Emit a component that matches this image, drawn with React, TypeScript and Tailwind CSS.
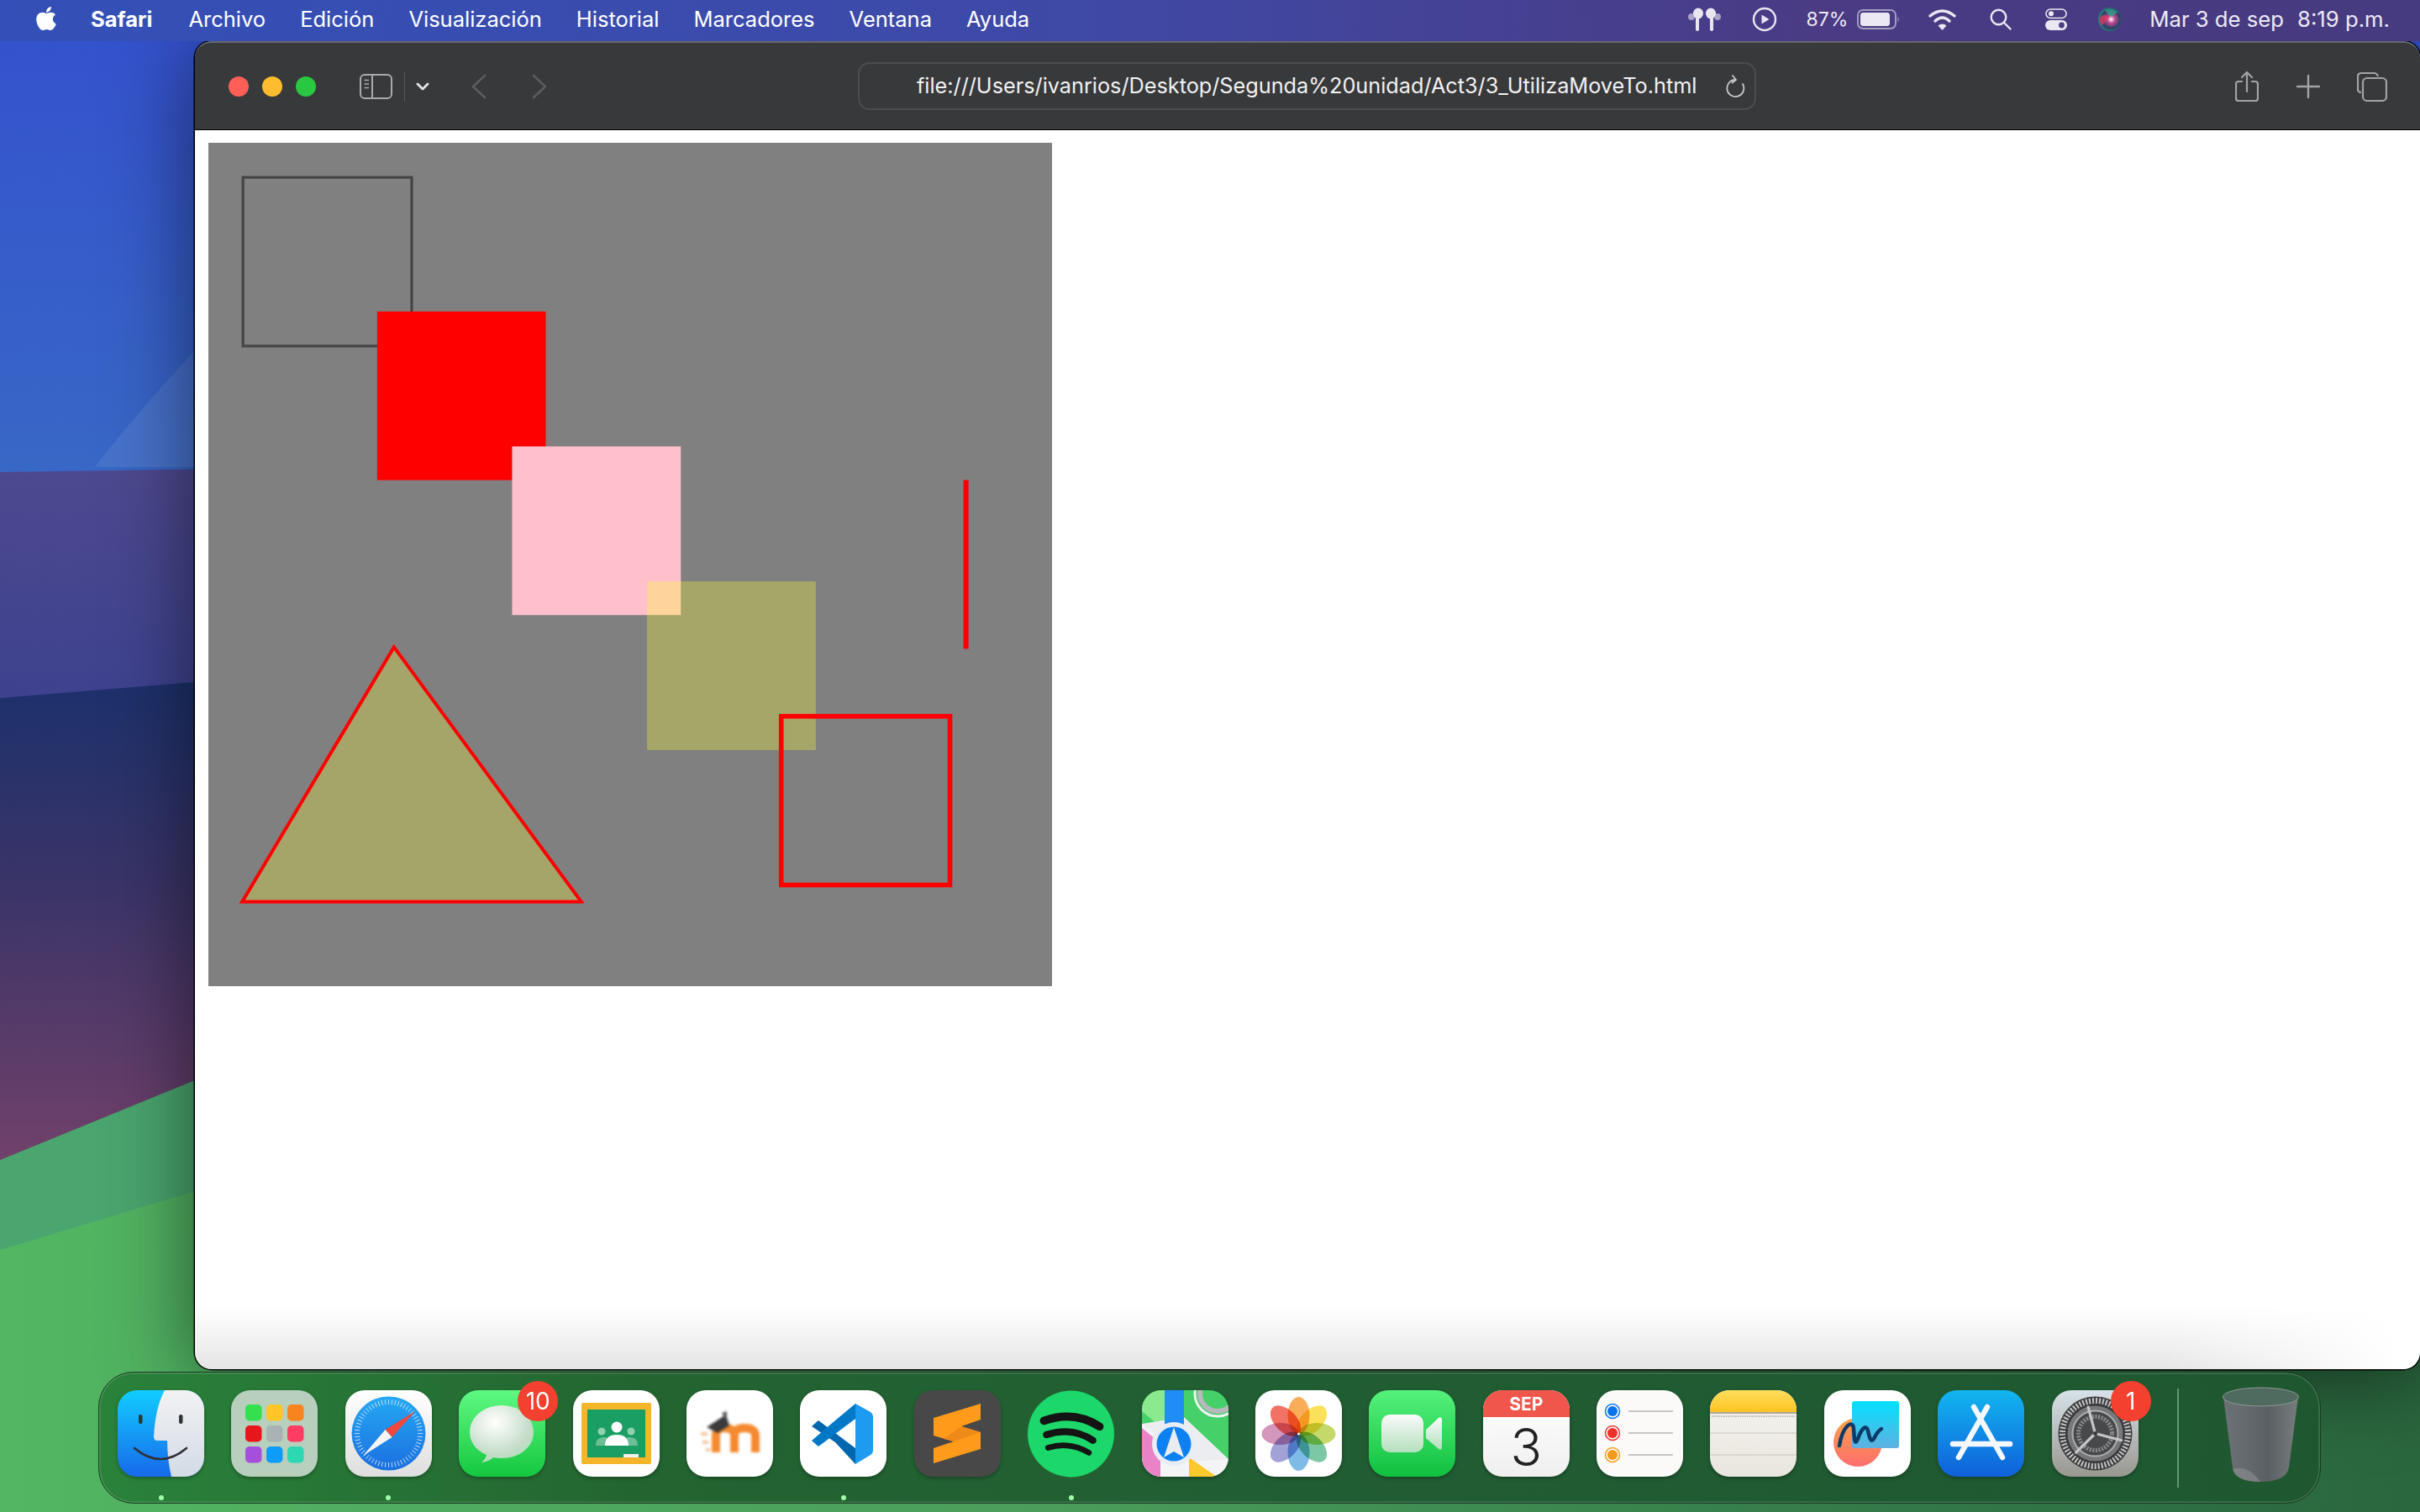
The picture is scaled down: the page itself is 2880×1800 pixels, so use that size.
import type { ReactNode } from "react";
import { FaApple } from "react-icons/fa";

const menuItems = ["Archivo", "Edición", "Visualización", "Historial", "Marcadores", "Ventana", "Ayuda"];

function Wallpaper() {
  return (
    <svg className="absolute inset-0" width="2880" height="1800" viewBox="0 0 2880 1800">
      <defs>
        <linearGradient id="wpBlue" x1="0" y1="0" x2="0" y2="1">
          <stop offset="0" stopColor="#3450ce" />
          <stop offset="1" stopColor="#3868c6" />
        </linearGradient>
        <linearGradient id="wpPurple" x1="0" y1="0" x2="0" y2="1">
          <stop offset="0" stopColor="#4f4a90" />
          <stop offset="1" stopColor="#3c418e" />
        </linearGradient>
        <linearGradient id="wpDusk" x1="0" y1="0" x2="0" y2="1">
          <stop offset="0" stopColor="#18306c" />
          <stop offset="0.45" stopColor="#3b3468" />
          <stop offset="1" stopColor="#74426a" />
        </linearGradient>
        <linearGradient id="wpGreen" x1="0" y1="0" x2="1" y2="0">
          <stop offset="0" stopColor="#52b662" />
          <stop offset="0.45" stopColor="#4a9c5a" />
          <stop offset="0.75" stopColor="#347c4a" />
          <stop offset="1" stopColor="#2a663e" />
        </linearGradient>
      </defs>
      <rect width="2880" height="570" fill="url(#wpBlue)" />
      <path d="M113 556 Q170 480 300 345 L300 556 Z" fill="#fff" opacity="0.08" />
      <path d="M0 562 L2880 520 V860 L0 831 Z" fill="url(#wpPurple)" />
      <path d="M0 831 L232 812 L2880 780 V1400 H0 Z" fill="url(#wpDusk)" />
      <path d="M0 1381 L232 1286 L2880 1200 V1800 H0 Z" fill="#4aa56e" />
      <path d="M0 1488 L232 1418 L2880 1300 V1800 H0 Z" fill="url(#wpGreen)" />
    </svg>
  );
}

function MenuBar() {
  return (
    <div className="relative z-20 flex h-[49px] items-center bg-[linear-gradient(to_right,#3350b8,#3f49a6_45%,#4a3b84_75%,#463a80)] pr-[36px] pb-[3px] pl-[40px] text-[25.5px] text-white">
      <FaApple className="mb-[3px] h-[32px] w-[30px]" />
      <span className="ml-[38px] font-bold">Safari</span>
      <span className="ml-[43px]">{menuItems[0]}</span>
      {menuItems.slice(1).map((item) => (
        <span key={item} className="ml-[41px]">
          {item}
        </span>
      ))}
      <div className="ml-auto flex items-center text-[#eeeaf5]">
        <svg width="39" height="28" viewBox="0 0 39 28" fill="#e9e6f0">
          <circle cx="4" cy="11" r="4" fill="#a9a2c4" />
          <circle cx="35" cy="11" r="4" fill="#a9a2c4" />
          <ellipse cx="12" cy="7" rx="6" ry="6.5" />
          <ellipse cx="27" cy="7" rx="6" ry="6.5" />
          <rect x="9" y="11" width="4" height="17" rx="2" />
          <rect x="26" y="11" width="4" height="17" rx="2" />
        </svg>
        <svg className="ml-[37px]" width="30" height="30" viewBox="0 0 30 30" fill="none" stroke="#e9e6f0" strokeWidth="2.4">
          <circle cx="15" cy="15" r="13" />
          <path d="M11.5 9.5 L20.5 15 L11.5 20.5 Z" fill="#e9e6f0" stroke="none" />
        </svg>
        <span className="ml-[34px] text-[23px]">87%</span>
        <svg className="ml-[11px]" width="51" height="24" viewBox="0 0 51 24" fill="none">
          <rect x="1" y="1" width="45" height="22" rx="6" stroke="#a49dbe" strokeWidth="2" />
          <rect x="4" y="4" width="35" height="16" rx="3.5" fill="#ebe8f2" />
          <path d="M48.5 8.5 Q51 12 48.5 15.5 Z" fill="#a49dbe" />
        </svg>
        <svg className="ml-[34px]" width="33" height="26" viewBox="0 0 33 26" fill="none" stroke="#ebe8f2" strokeWidth="3.4" strokeLinecap="round">
          <path d="M2 9 Q16.5 -3 31 9" />
          <path d="M8 15 Q16.5 7 25 15" />
          <path d="M16.5 26 L11.5 20.5 Q16.5 16.5 21.5 20.5 Z" fill="#ebe8f2" stroke="none" />
        </svg>
        <svg className="ml-[40px]" width="26" height="26" viewBox="0 0 26 26" fill="none" stroke="#ebe8f2" strokeWidth="2.4" strokeLinecap="round">
          <circle cx="10.5" cy="10.5" r="8.8" />
          <path d="M17 17 L24.5 24.5" />
        </svg>
        <svg className="ml-[40px]" width="26" height="26" viewBox="0 0 26 26">
          <rect x="1" y="1" width="24" height="10.5" rx="5.2" fill="none" stroke="#ebe8f2" strokeWidth="1.6" />
          <circle cx="7" cy="6.2" r="3" fill="#ebe8f2" />
          <rect y="14" width="26" height="12" rx="6" fill="#ebe8f2" />
          <circle cx="19.5" cy="20" r="3.4" fill="#4a3b84" />
        </svg>
        <svg className="ml-[37px]" width="28" height="28" viewBox="0 0 28 28">
          <defs>
            <radialGradient id="siri" cx="0.55" cy="0.5" r="0.55">
              <stop offset="0" stopColor="#fff" />
              <stop offset="0.3" stopColor="#c04a90" />
              <stop offset="0.7" stopColor="#2a3f66" />
              <stop offset="1" stopColor="#2a8a80" />
            </radialGradient>
          </defs>
          <circle cx="14" cy="14" r="14" fill="url(#siri)" />
          <path d="M2 12 Q6 6 13 11 Q9 18 4 21 Q1 16 2 12Z" fill="#e2365f" opacity="0.8" />
          <path d="M8 3 Q15 -1 23 5 Q19 10 14 11 Q11 7 8 3Z" fill="#2fa58b" opacity="0.75" />
        </svg>
        <span className="ml-[33px] whitespace-nowrap text-[25.7px]">Mar 3 de sep</span>
        <span className="ml-[16px] whitespace-nowrap text-[25.7px]">8:19 p.m.</span>
      </div>
    </div>
  );
}

function Toolbar() {
  return (
    <div className="flex h-[106px] shrink-0 items-center rounded-t-[20px] border-t-2 border-b border-t-[#66676a] border-b-black bg-[#38393b]">
      <div className="flex w-[789px] items-center pl-[40px]">
        <div className="h-[24px] w-[24px] rounded-full bg-[#ff5f57]" />
        <div className="ml-[16px] h-[24px] w-[24px] rounded-full bg-[#febc2e]" />
        <div className="ml-[16px] h-[24px] w-[24px] rounded-full bg-[#28c840]" />
        <svg className="ml-[52px]" width="39" height="30" viewBox="0 0 39 30" fill="none" stroke="#a9aaac" strokeWidth="2">
          <rect x="1" y="1" width="37" height="28" rx="5" />
          <path d="M15 1 V29" />
          <path d="M5.5 7.5 H11 M5.5 12 H11 M5.5 16.5 H11" strokeWidth="1.6" />
        </svg>
        <div className="ml-[14px] h-[36px] w-[1px] bg-[#56575a]" />
        <svg className="ml-[13px]" width="16" height="10" viewBox="0 0 16 10" fill="none" stroke="#e6e6e7" strokeWidth="2.8" strokeLinecap="round" strokeLinejoin="round">
          <path d="M2 2 L8 8 L14 2" />
        </svg>
        <svg className="ml-[50px]" width="18" height="30" viewBox="0 0 18 30" fill="none" stroke="#5c5d60" strokeWidth="2.6" strokeLinecap="round" strokeLinejoin="round">
          <path d="M16 2 L2 15 L16 28" />
        </svg>
        <svg className="ml-[54px]" width="18" height="30" viewBox="0 0 18 30" fill="none" stroke="#5c5d60" strokeWidth="2.6" strokeLinecap="round" strokeLinejoin="round">
          <path d="M2 2 L16 15 L2 28" />
        </svg>
      </div>
      <div className="flex h-[57px] w-[1069px] items-center rounded-[14px] border-2 border-[#4c4d50] pr-[11px] pl-[68px] text-[25.25px] text-[#f2f2f2]">
        <span className="whitespace-nowrap">file:///Users/ivanrios/Desktop/Segunda%20unidad/Act3/3_UtilizaMoveTo.html</span>
        <svg className="ml-auto" width="24" height="30" viewBox="0 0 24 30" fill="none" stroke="#c9c9ca" strokeWidth="1.8" strokeLinecap="round" strokeLinejoin="round">
          <path d="M12 7 A10 10 0 1 0 21 12" />
          <path d="M9 2 L13 7 L8.5 10.5" />
        </svg>
      </div>
      <div className="flex flex-1 items-center justify-end pr-[39px]">
        <svg width="28" height="38" viewBox="0 0 28 38" fill="none" stroke="#a3a4a6" strokeWidth="2.2" strokeLinecap="round" strokeLinejoin="round">
          <path d="M8 13 H4 Q1 13 1 16 V33 Q1 36 4 36 H24 Q27 36 27 33 V16 Q27 13 24 13 H20" />
          <path d="M14 25 V2 M8 8 L14 2 L20 8" />
        </svg>
        <svg className="ml-[45px]" width="28" height="28" viewBox="0 0 28 28" fill="none" stroke="#a3a4a6" strokeWidth="2.4" strokeLinecap="round">
          <path d="M14 1 V27 M1 14 H27" />
        </svg>
        <svg className="ml-[44px]" width="36" height="36" viewBox="0 0 36 36" fill="none" stroke="#a3a4a6" strokeWidth="2.2">
          <path d="M5 25 Q1 25 1 21 V6 Q1 2 5 2 H20 Q24 2 25 6" />
          <rect x="7" y="8" width="28" height="27" rx="5" />
        </svg>
      </div>
    </div>
  );
}

// lienzo del ejercicio: 500x500 unidades, escalado a 1004px
function CanvasDrawing() {
  return (
    <div className="mt-[14px] ml-[16px] h-[1004px] w-[1004px] bg-[#808080]">
      <svg className="blur-[0.6px]" width="1004" height="1004" viewBox="0 0 500 500">
        <rect x="20.5" y="20.5" width="100" height="100" fill="none" stroke="#454545" strokeWidth="1.6" />
        <rect x="100" y="100" width="100" height="100" fill="#ff0000" />
        <rect x="180" y="180" width="100" height="100" fill="#ffc0cb" />
        <rect x="260" y="260" width="100" height="100" fill="rgba(255,255,50,0.3)" />
        <rect x="339.5" y="340" width="100" height="100" fill="none" stroke="#ff0000" strokeWidth="2.8" />
        <path d="M449 200 V300" stroke="#ff0000" strokeWidth="3" />
        <path d="M110 299 L20 450 H221 Z" fill="#a6a569" stroke="#ff0000" strokeWidth="2" />
      </svg>
    </div>
  );
}

function BrowserWindow() {
  return (
    <div className="relative z-10 ml-[232px] flex h-[1581px] flex-col rounded-t-[20px] rounded-b-[20px] shadow-[0_0_0_1.5px_#000,0_10px_100px_rgba(0,0,0,0.55)]">
      <Toolbar />
      <div className="flex-1 overflow-hidden rounded-b-[20px] bg-white bg-[linear-gradient(to_right,transparent_2330px,white_2620px),linear-gradient(to_bottom,white_1400px,#e5e5e5_100%)] pt-px">
        <CanvasDrawing />
      </div>
    </div>
  );
}

const tileClass = "block h-[103px] w-[103px] overflow-hidden rounded-[23px] shadow-[0_2px_4px_rgba(0,0,0,0.3)]";

function Finder() {
  return (
    <svg className={tileClass} viewBox="0 0 103 103">
      <defs>
        <linearGradient id="fA" x1="0" y1="0" x2="0" y2="1">
          <stop offset="0" stopColor="#12cdff" />
          <stop offset="1" stopColor="#1769ea" />
        </linearGradient>
        <linearGradient id="fB" x1="0" y1="0" x2="0" y2="1">
          <stop offset="0" stopColor="#f2f2f4" />
          <stop offset="1" stopColor="#d3dbe6" />
        </linearGradient>
      </defs>
      <rect width="103" height="103" fill="url(#fA)" />
      <path d="M56 0 H103 V103 H64 Q59 82 59 60 H47 Q43 60 43 55 Q45 20 56 0 Z" fill="url(#fB)" />
      <rect x="25" y="29" width="4.5" height="11" rx="2.2" fill="#333" />
      <rect x="73" y="29" width="4.5" height="11" rx="2.2" fill="#333" />
      <path d="M20 69 Q51 95 82 69" fill="none" stroke="#2f2f33" strokeWidth="2.6" strokeLinecap="round" />
    </svg>
  );
}

function Launchpad() {
  const colors = ["#35e04f", "#ffc528", "#f8841f", "#e8161a", "#a9b2b5", "#ff3d62", "#a54fdc", "#0d9cf8", "#2bd8b1"];
  return (
    <svg className={tileClass} viewBox="0 0 103 103">
      <rect width="103" height="103" fill="#b7cfbc" />
      {colors.map((c, i) => (
        <rect key={c} x={17 + (i % 3) * 25} y={17 + Math.floor(i / 3) * 25} width="19.5" height="19.5" rx="5" fill={c} />
      ))}
    </svg>
  );
}

function Safari() {
  const ticks = Array.from({ length: 60 }, (_, i) => i * 6);
  return (
    <svg className={tileClass} viewBox="0 0 103 103">
      <defs>
        <linearGradient id="sBg" x1="0" y1="0" x2="0" y2="1">
          <stop offset="0" stopColor="#fff" />
          <stop offset="1" stopColor="#dedede" />
        </linearGradient>
        <linearGradient id="sBlue" x1="0" y1="0" x2="0" y2="1">
          <stop offset="0" stopColor="#25a8f4" />
          <stop offset="1" stopColor="#1b6fdf" />
        </linearGradient>
      </defs>
      <rect width="103" height="103" fill="url(#sBg)" />
      <circle cx="51.5" cy="51.5" r="44" fill="url(#sBlue)" />
      {ticks.map((a) => (
        <line key={a} x1="51.5" y1="11" x2="51.5" y2="17" stroke="#fff" strokeWidth="0.8" opacity="0.85" transform={`rotate(${a} 51.5 51.5)`} />
      ))}
      <path d="M83 25 L47.5 47 L55.5 56 Z" fill="#f0483c" />
      <path d="M21 78 L47.5 47 L55.5 56 Z" fill="#f4f4f4" />
    </svg>
  );
}

function Messages() {
  return (
    <svg className={tileClass} viewBox="0 0 103 103">
      <defs>
        <linearGradient id="mBg" x1="0" y1="0" x2="0" y2="1">
          <stop offset="0" stopColor="#5ff982" />
          <stop offset="1" stopColor="#14c73f" />
        </linearGradient>
        <radialGradient id="mBub" cx="0.4" cy="0.3" r="0.8">
          <stop offset="0" stopColor="#fff" />
          <stop offset="0.7" stopColor="#c4dcc8" />
          <stop offset="1" stopColor="#a6e2b2" />
        </radialGradient>
      </defs>
      <rect width="103" height="103" fill="url(#mBg)" />
      <path d="M51 18 C30 18 13 32 13 50 C13 62 21 72 33 77 Q32 82 27 86 Q36 85 41 80 Q46 81 51 81 C72 81 89 68 89 50 C89 32 72 18 51 18 Z" fill="url(#mBub)" />
    </svg>
  );
}

function Classroom() {
  return (
    <svg className={tileClass} viewBox="0 0 103 103">
      <rect width="103" height="103" fill="#fff" />
      <rect x="10" y="15" width="83" height="73" rx="2" fill="#f5b52a" />
      <rect x="17" y="23" width="69" height="57" fill="#1a9e63" />
      <circle cx="34" cy="49" r="4.5" fill="#8fd0ae" />
      <circle cx="69" cy="49" r="4.5" fill="#8fd0ae" />
      <path d="M27 66 Q27 56 36 56 H40 V66 Z M64 56 H68 Q77 56 77 66 H64 Z" fill="#6cbf95" />
      <circle cx="52" cy="44" r="6.5" fill="#fff" />
      <path d="M38 66 Q38 53 52 53 Q66 53 66 66 Z" fill="#fff" />
      <rect x="60" y="76" width="18" height="4" fill="#f1f1f1" />
    </svg>
  );
}

function Moodle() {
  return (
    <svg className={tileClass} viewBox="0 0 103 103">
      <rect width="103" height="103" fill="#fff" />
      <g className="blur-[1.6px]">
        <path d="M35 74 V54 Q35 45 45 45 Q57 45 57 54 V74 M57 54 Q57 45 69 45 Q82 45 82 54 V74" fill="none" stroke="#f5892f" strokeWidth="10" />
        <path d="M17 52 L25 52 M19 62 L26 62 M23 71 L28 71" stroke="#f7c5a0" strokeWidth="4" />
        <path d="M24 44 L47 29 L51 42 L37 51 Z" fill="#3a3a3c" />
        <path d="M42 27 L48 25 L48 36 Z" fill="#555" />
      </g>
    </svg>
  );
}

function VSCode() {
  return (
    <svg className={tileClass} viewBox="0 0 103 103">
      <rect width="103" height="103" fill="#fff" />
      <path d="M14 43 L22 36 L66 69 V88 L42 62 Z" fill="#0066ad" />
      <path d="M66 16 V34 L22 67 L14 60 L42 36 Z" fill="#0078c8" />
      <path d="M66 16 L84 26 Q87 28 87 31 V72 Q87 75 84 77 L66 88 Z" fill="#1c9bf0" />
    </svg>
  );
}

function Sublime() {
  return (
    <svg className={tileClass} viewBox="0 0 103 103">
      <rect width="103" height="103" fill="#484848" />
      <path d="M79 16 V35 L56 43 L79 50 V70 L23 87 V69 L47 61 L23 54 V33 Z" fill="#ff9a1a" />
      <path d="M47 61 L79 50 L56 43 L35 58 Z" fill="#ee8a18" />
    </svg>
  );
}

function Spotify() {
  return (
    <svg className="block h-[106px] w-[106px]" viewBox="0 0 106 106" fill="none" stroke="#141414" strokeLinecap="round">
      <circle cx="53" cy="53" r="53" fill="#1cd76a" stroke="none" />
      <path d="M20 37 Q57 24 88 44" strokeWidth="10" />
      <path d="M23 54 Q54 44 80 61" strokeWidth="8.5" />
      <path d="M25 70 Q51 62 75 76" strokeWidth="7" />
    </svg>
  );
}

function Maps() {
  return (
    <svg className={tileClass} viewBox="0 0 103 103">
      <rect width="103" height="103" fill="#45d06a" />
      <path d="M0 0 H30 V32 L20 42 L0 25 Z" fill="#8cea8e" />
      <path d="M0 40 L103 82 V103 H0 Z" fill="#f4f4f6" />
      <path d="M0 40 L50 32 L103 82 L60 85 Z" fill="#ecedf0" />
      <path d="M0 45 L22 63 V103 H0 Z" fill="#ea82c8" />
      <path d="M56 80 L89 103 H56 Z" fill="#fcc92c" />
      <rect x="27" y="0" width="23" height="42" fill="#1f8df5" />
      <circle cx="90" cy="4" r="27" fill="none" stroke="#f1f1f3" strokeWidth="3" />
      <circle cx="90" cy="4" r="21" fill="none" stroke="#b7b9bd" strokeWidth="6" />
      <circle cx="38" cy="64" r="26" fill="#e8edf5" />
      <circle cx="38" cy="64" r="20.5" fill="#0d80f2" />
      <path d="M38 44 L50 80 L38 73 L26 80 Z" fill="#e9edf2" />
    </svg>
  );
}

function Photos() {
  const petals = ["#ee4a3a", "#f8962a", "#f9d92a", "#b4cf3e", "#58b88a", "#5aa8e0", "#8888cc", "#c87aa8"];
  return (
    <svg className={tileClass} viewBox="0 0 103 103">
      <rect width="103" height="103" fill="#fff" />
      {petals.map((c, i) => (
        <ellipse key={c} cx="51.5" cy="30" rx="13" ry="22" fill={c} opacity="0.78" className="mix-blend-multiply" transform={`rotate(${i * 45 - 45} 51.5 52)`} />
      ))}
      <circle cx="51.5" cy="52" r="1.5" fill="#fff" />
    </svg>
  );
}

function FaceTime() {
  return (
    <svg className={tileClass} viewBox="0 0 103 103">
      <defs>
        <linearGradient id="ftBg" x1="0" y1="0" x2="0" y2="1">
          <stop offset="0" stopColor="#55f27c" />
          <stop offset="1" stopColor="#10c03f" />
        </linearGradient>
        <linearGradient id="ftCam" x1="0" y1="0" x2="0" y2="1">
          <stop offset="0" stopColor="#fafafa" />
          <stop offset="1" stopColor="#b4e0bd" />
        </linearGradient>
      </defs>
      <rect width="103" height="103" fill="url(#ftBg)" />
      <rect x="15" y="29" width="50" height="45" rx="10" fill="url(#ftCam)" />
      <path d="M68 47 L83 33 Q87 31 87 35 V68 Q87 72 83 70 L68 57 Z" fill="url(#ftCam)" />
    </svg>
  );
}

function CalendarIcon() {
  return (
    <div className="flex h-[103px] w-[103px] flex-col overflow-hidden rounded-[23px] bg-[linear-gradient(to_bottom,#ffffff,#efefef)] shadow-[0_2px_4px_rgba(0,0,0,0.3)]">
      <div className="flex h-[32px] items-center justify-center bg-[#f0564c] text-[21px] leading-none font-bold text-white">SEP</div>
      <div className="flex flex-1 items-center justify-center text-[62px] leading-none font-light text-[#222]">3</div>
    </div>
  );
}

function Reminders() {
  const rows = [
    { y: 25, color: "#0a74f0" },
    { y: 51, color: "#f0302a" },
    { y: 77, color: "#f49a1a" },
  ];
  return (
    <svg className={tileClass} viewBox="0 0 103 103">
      <rect width="103" height="103" fill="#fbfaf9" />
      {rows.map((r) => (
        <g key={r.y}>
          <circle cx="19" cy={r.y} r="8.5" fill="none" stroke={r.color} strokeWidth="1.5" />
          <circle cx="19" cy={r.y} r="6" fill={r.color} />
          <path d={`M38 ${r.y} H91`} stroke="#b4b4b6" strokeWidth="1.6" />
        </g>
      ))}
    </svg>
  );
}

function Notes() {
  return (
    <svg className={tileClass} viewBox="0 0 103 103">
      <defs>
        <linearGradient id="nY" x1="0" y1="0" x2="0" y2="1">
          <stop offset="0" stopColor="#ffdd5c" />
          <stop offset="1" stopColor="#ffc322" />
        </linearGradient>
        <linearGradient id="nB" x1="0" y1="0" x2="0" y2="1">
          <stop offset="0" stopColor="#f6f4ef" />
          <stop offset="1" stopColor="#e9e6df" />
        </linearGradient>
      </defs>
      <rect width="103" height="103" fill="url(#nB)" />
      <rect width="103" height="26" fill="url(#nY)" />
      <rect y="26" width="103" height="2" fill="#a9a69d" />
      <path d="M2 31 H101" stroke="#b5b3ad" strokeWidth="2" strokeDasharray="1.4 1.4" />
      <path d="M0 51 H103 M0 77 H103" stroke="#d4d2cc" strokeWidth="1.6" />
    </svg>
  );
}

function Freeform() {
  return (
    <svg className={tileClass} viewBox="0 0 103 103">
      <defs>
        <linearGradient id="ffB" x1="0" y1="0" x2="0" y2="1">
          <stop offset="0" stopColor="#05e0ff" />
          <stop offset="1" stopColor="#5fb0e0" />
        </linearGradient>
        <linearGradient id="ffO" x1="0" y1="0" x2="0" y2="1">
          <stop offset="0" stopColor="#f7a246" />
          <stop offset="1" stopColor="#ff6e6e" />
        </linearGradient>
      </defs>
      <rect width="103" height="103" fill="#fff" />
      <circle cx="40" cy="62" r="29" fill="url(#ffO)" />
      <rect x="33" y="13" width="56" height="56" rx="3" fill="url(#ffB)" />
      <path d="M18 66 C22 42 34 34 35 46 C36 60 36 66 40 58 C44 46 50 40 52 48 C54 58 56 64 60 56 C62 52 65 48 68 46" fill="none" stroke="#0d3a66" strokeWidth="4.5" strokeLinecap="round" />
    </svg>
  );
}

function AppStore() {
  return (
    <svg className={tileClass} viewBox="0 0 103 103">
      <defs>
        <linearGradient id="asBg" x1="0" y1="0" x2="0" y2="1">
          <stop offset="0" stopColor="#12b6f0" />
          <stop offset="1" stopColor="#0f60da" />
        </linearGradient>
      </defs>
      <rect width="103" height="103" fill="url(#asBg)" />
      <g stroke="#f4f8fc" strokeWidth="6.5" strokeLinecap="round">
        <path d="M43 20 L77 80" />
        <path d="M59 20 L25 80" />
        <path d="M18 64 H86" />
      </g>
    </svg>
  );
}

function SettingsIcon() {
  return (
    <svg className={tileClass} viewBox="0 0 103 103">
      <defs>
        <linearGradient id="stBg" x1="0" y1="0" x2="0" y2="1">
          <stop offset="0" stopColor="#d7e2e8" />
          <stop offset="1" stopColor="#98978f" />
        </linearGradient>
      </defs>
      <rect width="103" height="103" fill="url(#stBg)" />
      <circle cx="51.5" cy="51.5" r="44" fill="#3a3a3c" />
      <circle cx="51.5" cy="51.5" r="39" fill="none" stroke="#c4c4c4" strokeWidth="7" strokeDasharray="2 2" />
      <circle cx="51.5" cy="51.5" r="33" fill="#77787a" />
      <circle cx="51.5" cy="51.5" r="27" fill="#48494b" stroke="#aeaeae" strokeWidth="2" />
      <circle cx="51.5" cy="51.5" r="20" fill="none" stroke="#8d8e90" strokeWidth="5" strokeDasharray="2 1.6" />
      <g stroke="#c6c6c8" strokeWidth="3.2" strokeLinecap="round" transform="rotate(-15 51.5 51.5)">
        <path d="M51.5 51.5 V19" />
        <path d="M51.5 51.5 L79.5 67.5" />
        <path d="M51.5 51.5 L23.5 67.5" />
      </g>
      <circle cx="51.5" cy="51.5" r="2.5" fill="#3a3a3c" />
    </svg>
  );
}

function Trash() {
  return (
    <svg className="block h-[113px] w-[91px]" viewBox="0 0 91 113">
      <defs>
        <linearGradient id="trBody" x1="0" y1="0" x2="1" y2="0">
          <stop offset="0" stopColor="#6d7276" />
          <stop offset="0.6" stopColor="#5b6064" />
          <stop offset="1" stopColor="#777c7e" />
        </linearGradient>
      </defs>
      <path d="M1 12 L12 96 Q14 113 45 113 Q76 113 79 96 L90 12 Z" fill="url(#trBody)" />
      <path d="M12 98 Q30 92 45 113 Q16 113 12 98 Z" fill="#8d9092" opacity="0.6" />
      <ellipse cx="45.5" cy="12" rx="45" ry="11" fill="#4f6b5f" stroke="#8d9795" strokeWidth="1" />
    </svg>
  );
}

type DockEntry = { name: string; icon: ReactNode; dot?: boolean; badge?: string };

const dockApps: DockEntry[] = [
  { name: "finder", icon: <Finder />, dot: true },
  { name: "launchpad", icon: <Launchpad /> },
  { name: "safari", icon: <Safari />, dot: true },
  { name: "messages", icon: <Messages />, badge: "10" },
  { name: "classroom", icon: <Classroom /> },
  { name: "moodle", icon: <Moodle /> },
  { name: "vscode", icon: <VSCode />, dot: true },
  { name: "sublime", icon: <Sublime /> },
  { name: "spotify", icon: <Spotify />, dot: true },
  { name: "maps", icon: <Maps /> },
  { name: "photos", icon: <Photos /> },
  { name: "facetime", icon: <FaceTime /> },
  { name: "calendar", icon: <CalendarIcon /> },
  { name: "reminders", icon: <Reminders /> },
  { name: "notes", icon: <Notes /> },
  { name: "freeform", icon: <Freeform /> },
  { name: "appstore", icon: <AppStore /> },
  { name: "settings", icon: <SettingsIcon />, badge: "1" },
];

function Dock() {
  return (
    <div className="relative z-20 mt-[3px] ml-[117px] flex h-[157px] w-[2645px] rounded-[42px] border border-[#17391f] bg-[linear-gradient(to_right,#2a823a,#236431_25%,#215c33_60%,#1f5830)] pt-[21px] pl-[22px] shadow-[inset_0_0_0_1.5px_rgba(255,255,255,0.16)]">
      <div className="flex gap-[32.4px]">
        {dockApps.map((app) => (
          <div key={app.name} className="relative flex h-[103px] w-[103px] flex-col items-center">
            <div className="flex h-[103px] w-[103px] shrink-0 items-center justify-center">{app.icon}</div>
            {app.dot && <div className="mt-[22px] h-[6px] w-[6px] shrink-0 rounded-full bg-[#a0fba9]" />}
            {app.badge && (
              <div className="absolute top-[-11px] left-[70px] flex h-[48px] w-[48px] items-center justify-center rounded-full bg-[#f3402f] text-[28px] text-white">
                {app.badge}
              </div>
            )}
          </div>
        ))}
      </div>
      <div className="mt-[-2px] ml-[46px] h-[118px] w-[2px] bg-[#5f9a75]" />
      <div className="mt-[-4px] ml-[52px]">
        <Trash />
      </div>
    </div>
  );
}

export default function App() {
  return (
    <div className="relative h-[1800px] w-[2880px] overflow-hidden font-['Inter',sans-serif]">
      <Wallpaper />
      <MenuBar />
      <BrowserWindow />
      <Dock />
    </div>
  );
}
